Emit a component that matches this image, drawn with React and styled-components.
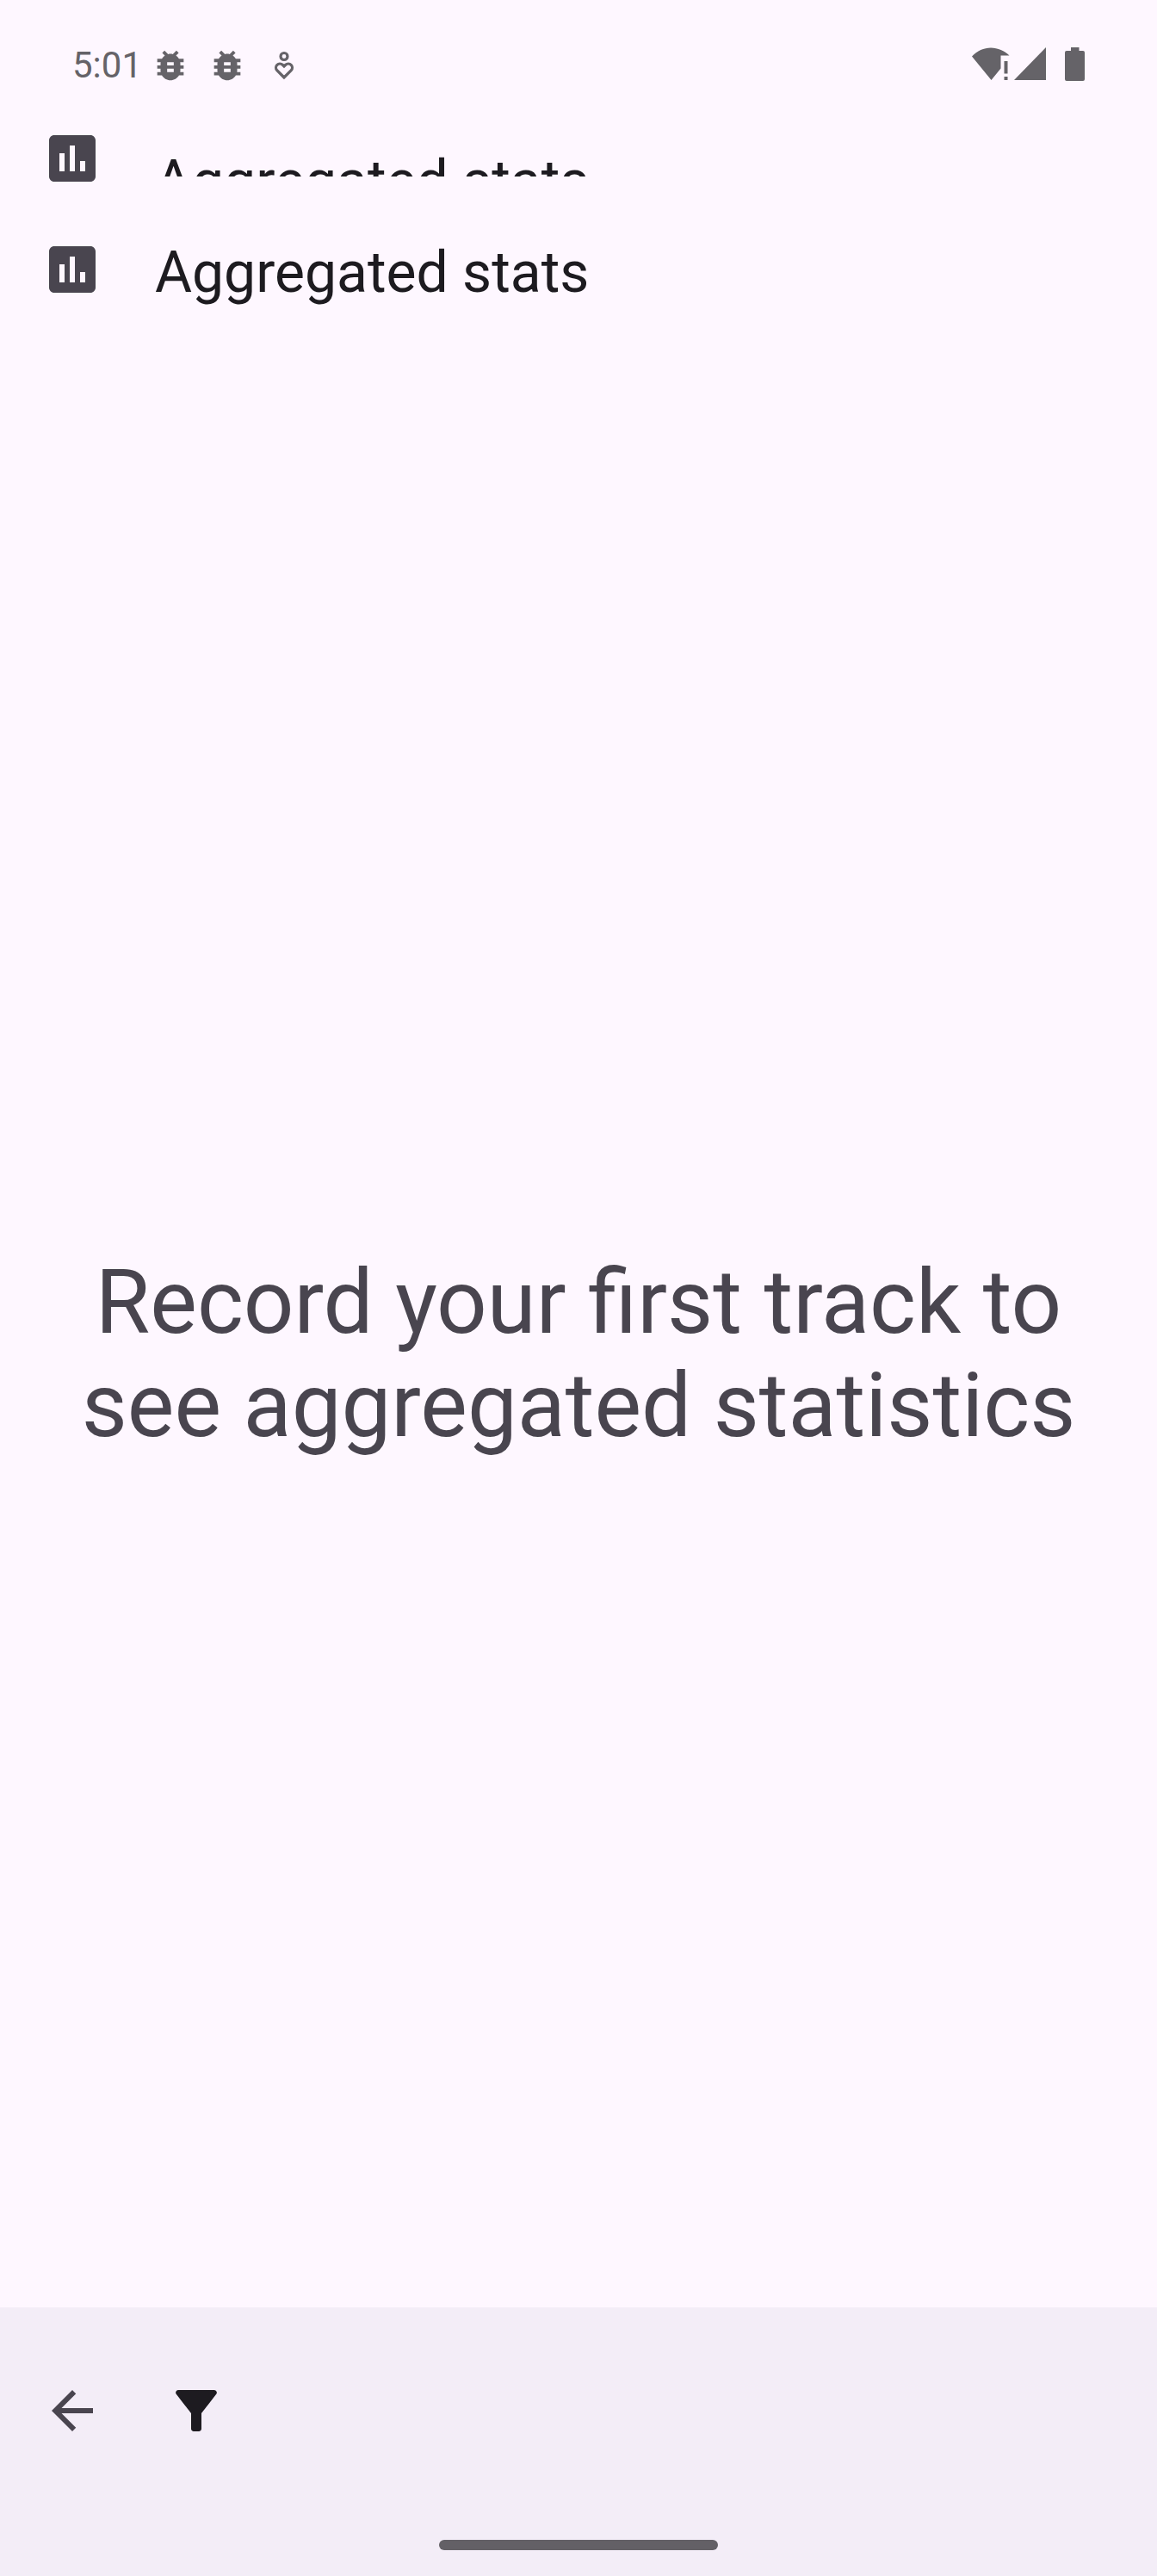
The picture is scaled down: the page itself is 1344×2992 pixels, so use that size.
import React from "react";
import styled, { createGlobalStyle } from "styled-components";

const GlobalStyle = createGlobalStyle`
  *, *::before, *::after { box-sizing: border-box; }
  body {
    margin: 0;
    background: #fef7ff;
    color: #1d1b20;
    font-family: Roboto, "Liberation Sans", sans-serif;
  }
`;

const Screen = styled.div`
  min-height: 100vh;
  display: flex;
  flex-direction: column;
`;

const StatusBar = styled.div`
  height: 148px;
  padding: 0 84px;
  display: flex;
  justify-content: space-between;
  color: #656368;
`;

const StatusGroup = styled.div`
  height: 152px;
  display: flex;
  align-items: center;
  gap: 20px;
`;

const SignalGroup = styled.div`
  height: 148px;
  display: flex;
  align-items: center;
  gap: 22px;
`;

const Network = styled.div`
  display: flex;
  gap: 5px;
`;

const Clock = styled.time`
  font-size: 42px;
  line-height: 48px;
  margin-right: -10px;
`;

const Glyph = styled.svg`
  display: block;
  flex: none;
  width: ${(p) => p.$w}px;
  height: ${(p) => p.$h ?? p.$w}px;
  fill: currentColor;
`;

const Header = styled.header`
  display: flex;
  flex-direction: column;
  gap: 57px;
  padding: 0 48px;
`;

const TitleRow = styled.div`
  display: flex;
  align-items: flex-start;
  gap: 60px;
  height: 72px;
  color: #49454f;
`;

const Title = styled.h1`
  margin: 0;
  font-size: 66px;
  font-weight: 400;
  line-height: 80px;
  color: #1d1b20;
`;

const CollapsedTitle = styled.div`
  height: 57px;
  padding-top: 23px;
  overflow: hidden;
  font-size: 66px;
  line-height: 80px;
  color: #1d1b20;
`;

const Content = styled.main`
  flex: 1;
  display: flex;
  align-items: center;
  justify-content: center;
  padding: 117px 48px 0;
`;

const EmptyMessage = styled.p`
  margin: 0;
  max-width: 1248px;
  font-size: 103px;
  line-height: 120px;
  text-align: center;
  color: #49454f;
`;

const BottomBar = styled.footer`
  display: flex;
  flex-direction: column;
  background: #f3edf7;
`;

const Toolbar = styled.nav`
  height: 240px;
  display: flex;
  align-items: center;
  padding: 0 12px;
`;

const IconButton = styled.button`
  width: 144px;
  height: 144px;
  padding: 0;
  border: 0;
  background: none;
  display: grid;
  place-items: center;
  color: ${(p) => p.$color};
`;

const GestureArea = styled.div`
  height: 72px;
  display: flex;
  align-items: center;
  justify-content: center;
`;

const Handle = styled.div`
  width: 324px;
  height: 12px;
  border-radius: 6px;
  background: #636066;
`;

const BugIcon = () => (
  <Glyph $w={46} viewBox="0 0 24 24" aria-hidden="true">
    <path d="M20 8h-2.81c-.45-.78-1.07-1.45-1.82-1.96L17 4.41 15.59 3l-2.17 2.17C12.96 5.06 12.49 5 12 5s-.96.06-1.41.17L8.41 3 7 4.41l1.62 1.63C7.88 6.55 7.26 7.22 6.81 8H4v2h2.09c-.05.33-.09.66-.09 1v1H4v2h2v1c0 .34.04.67.09 1H4v2h2.81c1.04 1.79 2.97 3 5.19 3s4.15-1.21 5.19-3H20v-2h-2.09c.05-.33.09-.66.09-1v-1h2v-2h-2v-1c0-.34-.04-.67-.09-1H20V8zm-6 8h-4v-2h4v2zm0-4h-4v-2h4v2z" />
  </Glyph>
);

const WellbeingIcon = () => (
  <Glyph $w={46} viewBox="0 0 46 46" aria-hidden="true">
    <g fill="none" stroke="currentColor" strokeWidth="3.2">
      <circle cx="23" cy="12.5" r="4" />
      <path d="M23 37L14.750 28.750a4.600 4.600 0 0 1 6.500-6.500L23 24L24.750 22.250a4.600 4.600 0 0 1 6.500 6.500Z" />
    </g>
  </Glyph>
);

const WifiIcon = () => (
  <Glyph $w={44} $h={38} viewBox="0 0 44 38" aria-hidden="true">
    <path d="M0 10.500C6 4 14 .5 22 .5S38 4 43.500 9.500H33.500V24.500L22.500 38Z" />
    <path d="M37.500 16h4v14.500h-4zM37.500 34h4v4h-4z" />
  </Glyph>
);

const SignalIcon = () => (
  <Glyph $w={37} $h={38} viewBox="0 0 37 38" aria-hidden="true">
    <path d="M0 38L37 0V38Z" />
  </Glyph>
);

const BatteryIcon = () => (
  <Glyph $w={23} $h={39} viewBox="0 0 23 39" aria-hidden="true">
    <path d="M7 0h9.500v4H21a2 2 0 0 1 2 2V37a2 2 0 0 1-2 2H2a2 2 0 0 1-2-2V6a2 2 0 0 1 2-2H7Z" />
  </Glyph>
);

const StatsIcon = () => (
  <Glyph $w={72} viewBox="0 0 24 24" aria-hidden="true">
    <path d="M19 3H5c-1.100 0-2 .9-2 2v14c0 1.100.9 2 2 2h14c1.100 0 2-.9 2-2V5c0-1.100-.9-2-2-2zM9 17H7v-7h2v7zm4 0h-2V7h2v10zm4 0h-2v-4h2v4z" />
  </Glyph>
);

const BackIcon = () => (
  <Glyph $w={72} viewBox="0 0 24 24" aria-hidden="true">
    <path d="M20 11H7.830l5.590-5.590L12 4l-8 8 8 8 1.410-1.410L7.830 13H20v-2z" />
  </Glyph>
);

const FilterIcon = () => (
  <Glyph $w={72} viewBox="0 0 24 24" aria-hidden="true">
    <path d="M4.250 5.610C6.270 8.200 10 13 10 13v6c0 .55.45 1 1 1h2c.55 0 1-.45 1-1v-6s3.720-4.800 5.740-7.390A1 1 0 0 0 18.950 4H5.040c-.83 0-1.300.95-.79 1.610z" />
  </Glyph>
);

export default function App() {
  return (
    <>
      <GlobalStyle />
      <Screen>
        <StatusBar>
          <StatusGroup>
            <Clock>5:01</Clock>
            <BugIcon />
            <BugIcon />
            <WellbeingIcon />
          </StatusGroup>
          <SignalGroup>
            <Network>
              <WifiIcon />
              <SignalIcon />
            </Network>
            <BatteryIcon />
          </SignalGroup>
        </StatusBar>
        <Header>
          <TitleRow>
            <StatsIcon />
            <CollapsedTitle aria-hidden="true">Aggregated stats</CollapsedTitle>
          </TitleRow>
          <TitleRow>
            <StatsIcon />
            <Title>Aggregated stats</Title>
          </TitleRow>
        </Header>
        <Content>
          <EmptyMessage>Record your first track to see aggregated statistics</EmptyMessage>
        </Content>
        <BottomBar>
          <Toolbar aria-label="Actions">
            <IconButton type="button" aria-label="Back" $color="#49454f">
              <BackIcon />
            </IconButton>
            <IconButton type="button" aria-label="Filter" $color="#1d1b20">
              <FilterIcon />
            </IconButton>
          </Toolbar>
          <GestureArea>
            <Handle />
          </GestureArea>
        </BottomBar>
      </Screen>
    </>
  );
}
